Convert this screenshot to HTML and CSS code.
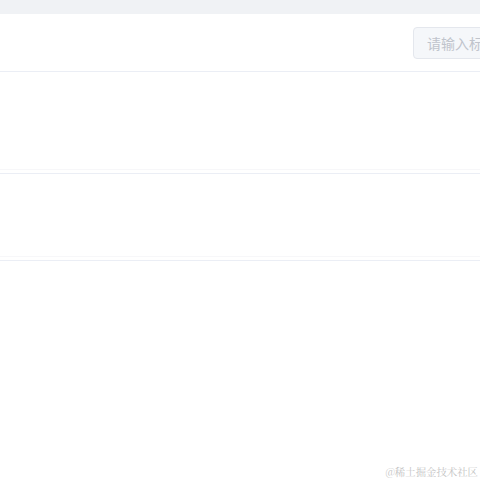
FILE: index.html
```html
<!DOCTYPE html>
<html lang="zh-CN">
<head>
<meta charset="utf-8">
<title>列表</title>
<link rel="stylesheet" href="styles.css">
</head>
<body>
<div class="viewport">
  <div class="page">
    <div class="topbar"></div>
    <div class="header">
      <input class="search" type="text" placeholder="请输入标题" disabled>
    </div>
    <div class="row row-first">
      <div class="cell"></div>
    </div>
    <div class="row row-second">
      <div class="cell"></div>
    </div>
  </div>
</div>
<div class="watermark">@稀土掘金技术社区</div>
</body>
</html>
```
FILE: styles.css
```css
html, body {
  margin: 0;
  padding: 0;
  background: #ffffff;
  overflow: hidden;
  width: 480px;
  height: 480px;
  font-family: "Liberation Sans", "Noto Sans CJK SC", sans-serif;
}
.viewport {
  width: 480px;
  overflow: hidden;
}
.page {
  width: 600px;
}
.topbar {
  height: 14px;
  background: #f0f2f5;
}
.header {
  height: 56px;
  display: flex;
  align-items: center;
  justify-content: flex-end;
  border-bottom: 1px solid #ebeef5;
  padding-top: 1px;
}
.search {
  box-sizing: border-box;
  width: 187px;
  height: 32px;
  margin: 0;
  padding: 0 13px;
  border: 1px solid #e4e7ed;
  border-radius: 4px;
  background: #f5f7fa;
  font-family: "Noto Sans CJK SC", sans-serif;
  font-size: 14px;
  color: #c0c4cc;
  outline: none;
}
.search::placeholder {
  color: #c0c4cc;
}
.row {
  border-bottom: 1px solid #ebeef5;
}
.row .cell {
  border-bottom: 1px solid #f7f7f9;
}
.row-first {
  padding-bottom: 3px;
}
.row-first .cell {
  height: 97px;
}
.row-second {
  padding-bottom: 3px;
}
.row-second .cell {
  height: 82px;
}
.watermark {
  position: absolute;
  right: 2px;
  top: 464px;
  font-family: "Noto Serif CJK SC", "Liberation Serif", "Noto Sans CJK SC", serif;
  font-size: 10.4px;
  color: #c4c4c4;
}
```
